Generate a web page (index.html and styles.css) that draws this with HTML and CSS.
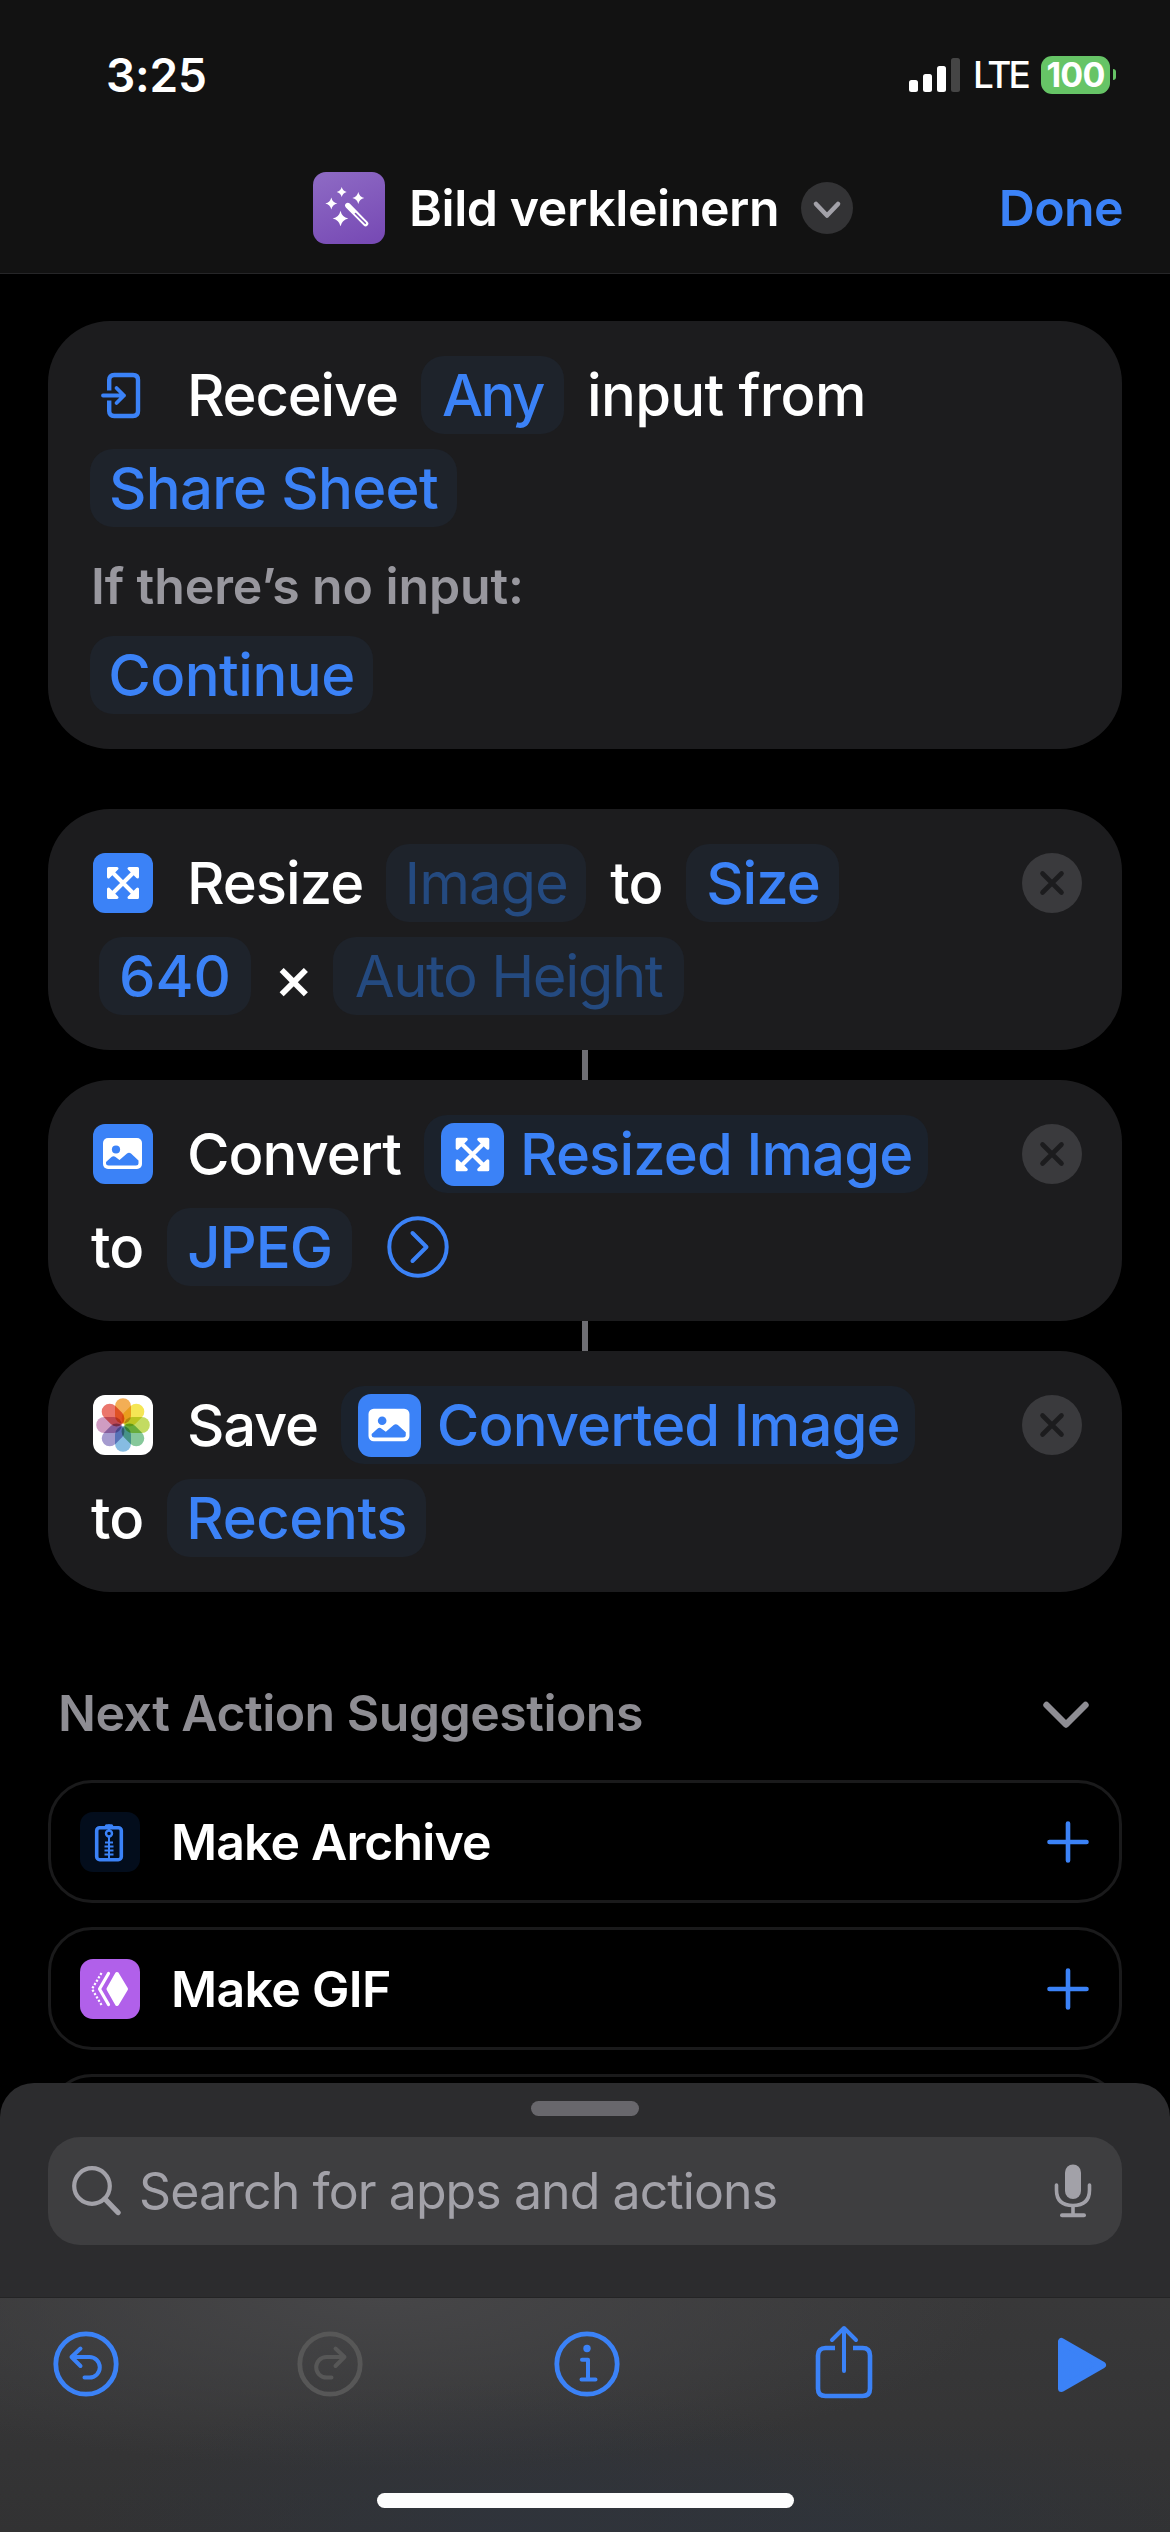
FILE: index.html
```
<!DOCTYPE html>
<html lang="en">
<head>
<meta charset="utf-8">
<title>Bild verkleinern</title>
<link rel="stylesheet" href="styles.css">
</head>
<body>
<svg class="defs" width="0" height="0" aria-hidden="true">
  <symbol id="resize" viewBox="0 0 60 60">
    <g fill="currentColor" stroke="currentColor" stroke-width="3" stroke-linejoin="round">
      <path d="M15.500 15.500h8.500l-8.500 8.500zM44.500 15.500v8.500l-8.500-8.500zM15.500 44.500v-8.500l8.500 8.500zM44.500 44.500h-8.500l8.500-8.500z"/>
      <path d="M18 18L42 42M42 18L18 42" stroke-width="4"/>
    </g>
  </symbol>
  <symbol id="photo" viewBox="0 0 60 60">
    <rect x="10" y="14" width="39" height="31" rx="5" fill="#fff"/>
    <circle cx="23" cy="25.500" r="4.100" fill="#3b82f7"/>
    <path d="M13 39.500v-1.500l5.500-5q2-1.600 4 0l4 3 7.500-6.500q2-1.500 4 0l7.500 7v3q0 2-2.500 2H15.500q-2.500 0-2.500-2z" fill="#3b82f7"/>
  </symbol>
  <symbol id="close" viewBox="0 0 60 60">
    <circle cx="30" cy="30" r="30" fill="#3a3a3d"/>
    <path d="M20.500 20.500L39.500 39.500M39.500 20.500L20.500 39.500" stroke="#1c1c1e" stroke-width="4.600" stroke-linecap="round"/>
  </symbol>
  <symbol id="plus" viewBox="0 0 42 42">
    <path d="M21 2.500V39.500M2.500 21H39.500" stroke="#3b82f7" stroke-width="4.600" stroke-linecap="round"/>
  </symbol>
</svg>

<div class="screen">
  <header class="top">
    <div class="status">
      <span class="time">3:25</span>
      <div class="indicators">
        <svg class="signal" width="52" height="34" viewBox="0 0 52 34">
          <rect x="0" y="22" width="9" height="12" rx="2.500" fill="#fff"/>
          <rect x="14" y="16" width="9" height="18" rx="2.500" fill="#fff"/>
          <rect x="28" y="8" width="9" height="26" rx="2.500" fill="#fff"/>
          <rect x="42" y="0" width="9" height="34" rx="2.500" fill="#454545"/>
        </svg>
        <span class="network">LTE</span>
        <span class="battery">100</span>
        <span class="nub"></span>
      </div>
    </div>
    <div class="nav">
      <svg class="app" width="72" height="72" viewBox="0 0 72 72">
        <defs><linearGradient id="violet" x1="0.300" y1="0" x2="0.700" y2="1"><stop offset="0" stop-color="#8c68c3"/><stop offset="1" stop-color="#784bb5"/></linearGradient></defs>
        <rect width="72" height="72" rx="13" fill="url(#violet)"/>
        <g fill="#fff">
          <path d="M28.700 15q1 4 5 5q-4 1-5 5q-1-4-5-5q4-1 5-5z"/>
          <path d="M45.300 20q1.100 4.900 6 6q-4.900 1.100-6 6q-1.100-4.900-6-6q4.900-1.100 6-6z"/>
          <path d="M18.300 25.500q1.100 4.900 6 6q-4.900 1.100-6 6q-1.100-4.900-6-6q4.900-1.100 6-6z"/>
          <path d="M27.500 38.700q1.400 6.400 7.800 7.800q-6.400 1.400-7.800 7.800q-1.400-6.400-7.800-7.800q6.400-1.400 7.800-7.800z"/>
        </g>
        <path d="M34.800 33.500L52.600 51.600" stroke="#fff" stroke-width="5.400" stroke-linecap="round"/>
        <path d="M42.500 41.500L52.300 51.300" stroke="#7d53b9" stroke-width="1.600" stroke-linecap="round"/>
      </svg>
      <h1>Bild verkleinern</h1>
      <svg width="52" height="52" viewBox="0 0 52 52">
        <circle cx="26" cy="26" r="26" fill="#333335"/>
        <path d="M15 22L26 33.500L37 22" fill="none" stroke="#a2a1a8" stroke-width="4.600" stroke-linecap="round" stroke-linejoin="round"/>
      </svg>
      <a class="done">Done</a>
    </div>
  </header>

  <main>
    <section class="card">
      <div class="row">
        <svg class="lead" viewBox="0 0 60 60" fill="none" stroke="#3b82f7" stroke-width="4.400" stroke-linecap="butt" stroke-linejoin="round">
          <path d="M16.200 25.500V15q0-5 5-5H40q5 0 5 5V46q0 5-5 5H21.200q-5 0-5-5V35.500"/>
          <path d="M10 30.500H31M23.500 23L31 30.500L23.500 38" stroke-width="3.800" stroke-linecap="round"/>
        </svg>
        <span class="word tight">Receive</span>
        <span class="pill any">Any</span>
        <span class="word from">input from</span>
      </div>
      <div class="row"><span class="pill sheet-name">Share Sheet</span></div>
      <p class="note">If there’s no input:</p>
      <div class="row"><span class="pill continue">Continue</span></div>
    </section>

    <section class="card action">
      <div class="row">
        <svg class="lead tile"><use href="#resize"/></svg>
        <span class="word">Resize</span>
        <span class="pill empty image">Image</span>
        <span class="word mid">to</span>
        <span class="pill size">Size</span>
        <svg class="close"><use href="#close"/></svg>
      </div>
      <div class="row">
        <span class="pill number">640</span>
        <span class="word times">×</span>
        <span class="pill empty height">Auto Height</span>
      </div>
    </section>
    <div class="link"></div>
    <section class="card">
      <div class="row">
        <svg class="lead tile"><use href="#photo"/></svg>
        <span class="word">Convert</span>
        <span class="pill var resized"><svg class="chip"><use href="#resize"/></svg>Resized Image</span>
        <svg class="close"><use href="#close"/></svg>
      </div>
      <div class="row">
        <span class="word start">to</span>
        <span class="pill jpeg">JPEG</span>
        <svg class="more" width="62" height="62" viewBox="0 0 62 62" fill="none" stroke="#3b82f7" stroke-width="4">
          <circle cx="31" cy="31" r="28.700"/>
          <path d="M25.500 17L39.500 31L25.500 45" stroke-linecap="round" stroke-linejoin="round"/>
        </svg>
      </div>
    </section>
    <div class="link"></div>
    <section class="card">
      <div class="row">
        <svg class="lead photos" viewBox="0 0 60 60">
          <rect x="22" y="3.200" width="16" height="25.500" rx="8" fill="#f3ae55"/>
          <rect x="22" y="3.200" width="16" height="25.500" rx="8" fill="#f5e655" transform="rotate(45 30 30)"/>
          <rect x="22" y="3.200" width="16" height="25.500" rx="8" fill="#c3db62" transform="rotate(90 30 30)"/>
          <rect x="22" y="3.200" width="16" height="25.500" rx="8" fill="#86c89a" transform="rotate(135 30 30)"/>
          <rect x="22" y="3.200" width="16" height="25.500" rx="8" fill="#86bce2" transform="rotate(180 30 30)"/>
          <rect x="22" y="3.200" width="16" height="25.500" rx="8" fill="#a59bcf" transform="rotate(225 30 30)"/>
          <rect x="22" y="3.200" width="16" height="25.500" rx="8" fill="#cf9cc2" transform="rotate(270 30 30)"/>
          <rect x="22" y="3.200" width="16" height="25.500" rx="8" fill="#ea766c" transform="rotate(315 30 30)"/>
        </svg>
        <span class="word save">Save</span>
        <span class="pill var converted"><svg class="chip"><use href="#photo"/></svg>Converted Image</span>
        <svg class="close"><use href="#close"/></svg>
      </div>
      <div class="row">
        <span class="word start">to</span>
        <span class="pill recents">Recents</span>
      </div>
    </section>

    <div class="heading">
      <h2>Next Action Suggestions</h2>
      <svg class="fold" width="46" height="28" viewBox="0 0 46 28"><path d="M3.500 4L23 23.500L42.500 4" fill="none" stroke="#8e8d93" stroke-width="6.400" stroke-linecap="round" stroke-linejoin="round"/></svg>
    </div>
    <div class="suggestion">
      <svg class="badge archive" viewBox="0 0 60 60" fill="none" stroke="#3b82f7">
        <rect x="16.700" y="15.700" width="24.600" height="32" rx="3" stroke-width="3.600"/>
        <circle cx="29" cy="21.500" r="3" stroke-width="2.400"/>
        <path d="M29 12.500V18M29 24.500V47M25 30.500H33M24.500 34.500H33.500M24.500 38.500H33.500M24.500 42.500H33.500" stroke-width="2"/>
        <path d="M26.500 14H31.500" stroke-width="3.500" stroke-linecap="round"/>
      </svg>
      <span class="label archive-label">Make Archive</span>
      <svg class="add"><use href="#plus"/></svg>
    </div>
    <div class="suggestion">
      <svg class="badge gif" viewBox="0 0 60 60" fill="none" stroke="#fff" stroke-linejoin="round">
        <path d="M37 15L46 30L37 45L28.500 30z" fill="#fff" stroke-width="4"/>
        <path d="M28.500 14.500L19.500 30L28.500 45.500" stroke-width="3.200" stroke-linecap="round"/>
        <path d="M21.500 14L12 30L21.500 46" stroke-width="2.200" stroke-dasharray="2.200 1.700"/>
      </svg>
      <span class="label gif-label">Make GIF</span>
      <svg class="add"><use href="#plus"/></svg>
    </div>
    <div class="suggestion"></div>
  </main>

  <section class="drawer">
    <div class="handle"></div>
    <div class="search">
      <svg width="50" height="50" viewBox="0 0 50 50" fill="none" stroke="#a2a1a8" stroke-linecap="round">
        <circle cx="20" cy="20" r="17.800" stroke-width="4.200"/>
        <path d="M33 33L46 46.500" stroke-width="5.400"/>
      </svg>
      <span class="placeholder">Search for apps and actions</span>
      <svg class="mic" width="38" height="54" viewBox="0 0 38 54" fill="none" stroke="#a2a1a8" stroke-linecap="round">
        <rect x="11" y="0.500" width="16" height="34.500" rx="8" fill="#a2a1a8" stroke="none"/>
        <path d="M2.500 21V26q0 15.500 16.500 15.500T35.500 26V21" stroke-width="3.600"/>
        <path d="M19 42V50" stroke-width="3.600"/>
        <path d="M8 51.300H30" stroke-width="4"/>
      </svg>
    </div>
  </section>

  <footer class="toolbar">
    <div class="tools">
      <svg class="undo" width="66" height="66" viewBox="0 0 66 66" fill="none" stroke="#3b82f7" stroke-linecap="round" stroke-linejoin="round">
        <circle cx="33" cy="33" r="30.200" stroke-width="4.800"/>
        <path d="M27.500 17.500L18.500 26L27.500 35M18.500 26H36.500a10.300 10.300 0 0 1 0 20.600H31.500" stroke-width="4"/>
      </svg>
      <svg class="redo" width="66" height="66" viewBox="0 0 66 66" fill="none" stroke="#575757" stroke-linecap="round" stroke-linejoin="round">
        <circle cx="33" cy="33" r="30.200" stroke-width="4.800"/>
        <path d="M38.500 17.500L47.500 26L38.500 35M47.500 26H29.500a10.300 10.300 0 0 0 0 20.600H34.500" stroke-width="4"/>
      </svg>
      <svg class="info" width="66" height="66" viewBox="0 0 66 66" fill="none" stroke="#3b82f7" stroke-linecap="round" stroke-linejoin="round">
        <circle cx="33" cy="33" r="30.200" stroke-width="4.800"/>
        <circle cx="33" cy="17.500" r="3.700" fill="#3b82f7" stroke="none"/>
        <path d="M28 28.800H34V48.500M27.500 48.500H41.500" stroke-width="4"/>
      </svg>
      <svg class="share" width="58" height="74" viewBox="0 0 58 74" fill="none" stroke="#3b82f7" stroke-linejoin="round">
        <path d="M20 23H10.500q-7.500 0-7.500 7.500V63.500q0 7.500 7.500 7.500H47.500q7.500 0 7.500-7.500V30.500q0-7.500-7.500-7.500H38" stroke-width="4.600"/>
        <path d="M29 3V46M17 15L29 3L41 15" stroke-width="4" stroke-linecap="round"/>
      </svg>
      <svg class="play" width="50" height="56" viewBox="0 0 50 56"><path d="M4.500 4.500V51.500L45.500 28z" fill="#3b82f7" stroke="#3b82f7" stroke-width="7" stroke-linejoin="round"/></svg>
    </div>
    <div class="home"></div>
  </footer>
</div>
</body>
</html>
```
FILE: styles.css
```
* { box-sizing: border-box; margin: 0; }
body { background: #000; color: #fff; font-family: Inter, "Liberation Sans", sans-serif; }
svg { display: block; flex: none; }
.defs { position: absolute; }
.screen { width: 1170px; height: 2532px; display: flex; flex-direction: column; overflow: hidden; }

.top { height: 274px; background: #121212; border-bottom: 1px solid #262628; }
.status { height: 149px; padding: 0 54px 0 106px; display: flex; align-items: center; justify-content: space-between; }
.time { font-size: 46px; font-weight: 600; letter-spacing: -0.2px; }
.indicators { display: flex; align-items: center; }
.network { margin-left: 12px; width: 58px; font-size: 37px; font-weight: 500; letter-spacing: -3.1px; }
.battery { margin-left: 10px; width: 69px; height: 38px; border-radius: 11px; background: #66c466; font-size: 34px; font-weight: 700; line-height: 38px; letter-spacing: -0.8px; text-align: center; }
.nub { margin-left: 3px; width: 3px; height: 11px; border-radius: 0 3px 3px 0; background: #66c466; }
.nav { height: 118px; padding: 0 47px 0 313px; display: flex; align-items: center; }
h1 { margin: 0 22px 0 24px; font-size: 50px; font-weight: 600; line-height: 60px; letter-spacing: -0.42px; white-space: nowrap; }
.done { margin-left: auto; color: #3b82f7; font-size: 50px; font-weight: 600; line-height: 60px; letter-spacing: -0.6px; }

main { flex: 1; min-height: 0; padding: 47px 48px 0; overflow: hidden; }
.card { padding: 35px 40px 35px 42px; border-radius: 62px; background: #1c1c1e; }
.card.action { margin-top: 60px; }
.row { height: 78px; display: flex; align-items: center; gap: 23px; font-size: 58px; font-weight: 500; line-height: 78px; white-space: nowrap; letter-spacing: -1px; }
.row + .row { margin-top: 15px; }
.lead { width: 60px; height: 60px; margin: 0 11px 0 3px; }
.tile { border-radius: 12px; background: #3b82f7; color: #fff; }
.photos { border-radius: 12px; background: #fff; isolation: isolate; }
.photos rect { mix-blend-mode: multiply; }
.tight { letter-spacing: -1.200px; }
.save { letter-spacing: -1.240px; }
.from { letter-spacing: -0.650px; }
.mid { margin: 0 1px; }
.start { margin: 0 1px; }
.times { width: 36px; text-align: center; letter-spacing: 0; font-size: 59px; padding-top: 4px; }
.pill { height: 78px; border-radius: 23px; background: #1e232b; color: #3b82f7; text-align: center; }
.empty { color: #244a80; font-weight: 400; }
.any { width: 143px; letter-spacing: -2.600px; }
.sheet-name { width: 367px; letter-spacing: -0.650px; }
.continue { width: 283px; letter-spacing: -0.500px; }
.image { width: 200px; }
.size { width: 153px; }
.number { width: 152px; margin-left: 9px; letter-spacing: 0; }
.height { width: 351px; letter-spacing: -1.460px; }
.var { display: flex; align-items: center; gap: 16px; padding-left: 17px; background: #1b222c; letter-spacing: -0.880px; }
.chip { width: 63px; height: 63px; border-radius: 13px; background: #3b82f7; color: #fff; }
.resized { width: 504px; }
.converted { width: 574px; }
.jpeg { width: 185px; }
.more { margin-left: 12px; }
.recents { width: 259px; letter-spacing: -0.420px; }
.close { width: 60px; height: 60px; margin-left: auto; }
.note { height: 109px; padding: 9px 0 0 1px; color: #98979e; font-size: 50px; font-weight: 600; line-height: 100px; letter-spacing: -0.100px; }
.link { width: 6px; height: 30px; margin: 0 auto; background: #6e6e73; }

.heading { height: 188px; padding: 59px 33px 6px 10px; display: flex; align-items: center; justify-content: space-between; }
h2 { color: #8e8d93; font-size: 50px; font-weight: 600; line-height: 60px; letter-spacing: -0.530px; }
.fold { margin-top: 5px; }
.suggestion { height: 123px; margin-bottom: 24px; padding: 0 30px 0 29px; display: flex; align-items: center; border: 3px solid #1a1a1b; border-radius: 44px; }
.badge { width: 60px; height: 60px; border-radius: 13px; }
.archive { background: #030d1c; }
.gif { background: #b160ea; }
.label { margin-left: 31px; font-size: 50px; font-weight: 600; letter-spacing: -0.880px; }
.gif-label { letter-spacing: -0.660px; }
.add { width: 42px; height: 42px; margin-left: auto; }

.drawer { height: 215px; padding: 18px 48px 0; border-radius: 34px 34px 0 0; background: #2c2c2e; border-bottom: 1px solid #242425; }
.handle { width: 108px; height: 15px; margin: 0 auto; border-radius: 8px; background: #68676c; }
.search { height: 108px; margin-top: 21px; padding: 0 30px 0 24px; display: flex; align-items: center; border-radius: 32px; background: #3e3e40; }
.placeholder { margin-left: 17px; color: #a2a1a8; font-size: 50px; letter-spacing: -0.920px; }
.mic { margin-left: auto; }

.toolbar { height: 234px; padding: 28px 0 0 53px;
  background:
    radial-gradient(ellipse 420px 150px at 500px 100%, rgba(46, 52, 62, 0.700), rgba(46, 52, 62, 0)),
    radial-gradient(ellipse 420px 110px at 830px 100%, rgba(46, 52, 60, 0.700), rgba(46, 52, 60, 0)),
    radial-gradient(ellipse 620px 170px at 380px 0, #464648, rgba(70, 70, 72, 0)),
    linear-gradient(#383839, #323233); }
.tools { height: 74px; display: flex; align-items: center; }
.undo, .redo, .info { margin-top: 1px; }
.redo { margin-left: 178px; }
.info { margin-left: 191px; }
.share { margin: -2px 0 0 195px; }
.play { margin: 4px 0 0 184px; }
.home { width: 417px; height: 15px; margin: 93px 0 0 324px; border-radius: 8px; background: #fdfdfd; }
```
